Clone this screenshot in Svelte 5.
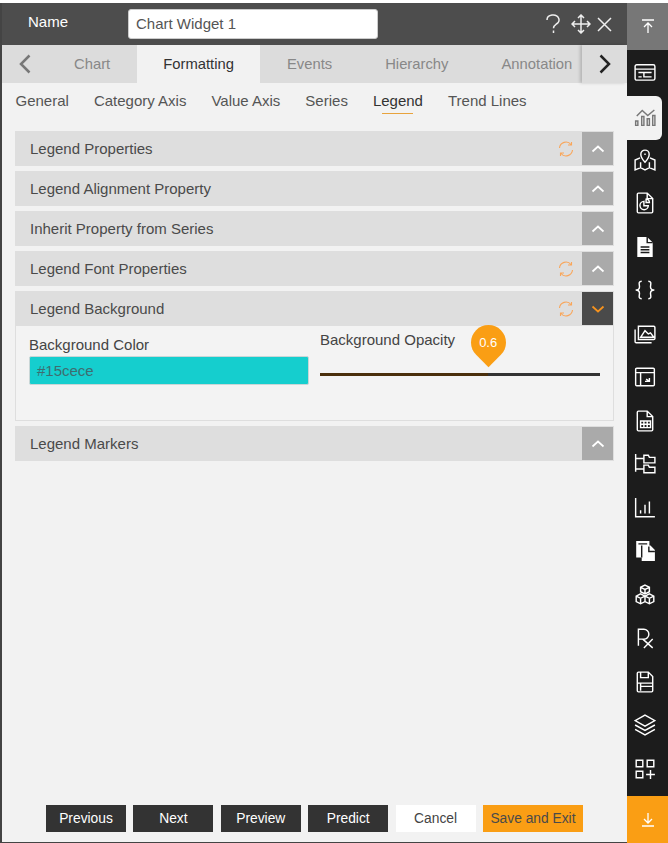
<script>
  const tabs = ["Chart", "Formatting", "Events", "Hierarchy", "Annotation"];
  const subTabs = ["General", "Category Axis", "Value Axis", "Series", "Legend", "Trend Lines"];
  const sections = [
    { title: "Legend Properties", reset: true },
    { title: "Legend Alignment Property" },
    { title: "Inherit Property from Series" },
    { title: "Legend Font Properties", reset: true },
    { title: "Legend Background", reset: true, open: true },
    { title: "Legend Markers" },
  ];
  const footer = ["Previous", "Next", "Preview", "Predict"];

  // one path per sidebar icon, all drawn on a 20x20 box
  const sideIcons = [
    "M2.500 2.500h15a1.500 1.500 0 0 1 1.500 1.500v11a1.500 1.500 0 0 1-1.500 1.500h-15a1.500 1.500 0 0 1-1.500-1.500V4a1.500 1.500 0 0 1 1.500-1.500zM1 6.500h18M4 9.500h12M9 9.500v4h7M4 13.500h3",
    "M1.500 18.500v-4h2v4zM7 18.500v-8h2v8zM12 18.500v-6h2v6zM17 18.500v-9h2v9zM2.500 10l5-5 5 4.500 6-5",
    "M5.500 8L1 10v9l5-2 4 2 4-2 5 2v-9l-4.500-2M6 17v-5M14 17v-5M10 1a3.800 3.800 0 0 1 3.800 3.800C13.800 8 10 12 10 12s-3.800-4-3.800-7.200A3.800 3.800 0 0 1 10 1zM10 4v1.500",
    "M4 1h8l5 5v12a1 1 0 0 1-1 1H4a1 1 0 0 1-1-1V2a1 1 0 0 1 1-1zM12 1v5h5M9 8.500a3.800 3.800 0 1 0 4 4H9zM11 6.500a3 3 0 0 1 3 3h-3z",
    "",
    "M7 2C3.500 2 5 5 5 7s-1 3-3.500 3C4 10 5 11 5 13s-1.500 5 2 5M13 2c3.500 0 2 3 2 5s1 3 3.500 3C16 10 15 11 15 13s1.500 5-2 5",
    "M4 3h14a1 1 0 0 1 1 1v10a1 1 0 0 1-1 1H4zM4 3v12M1 6v11a1 1 0 0 0 1 1h14M6 13l4-6 3 3 2-1 3 4z",
    "M2.500 2h15a1 1 0 0 1 1 1v14a1 1 0 0 1-1 1h-15a1 1 0 0 1-1-1V3a1 1 0 0 1 1-1zM1.500 6h17M6 6v12M10 14h4v-3M14 14l-3-2",
    "M4 1h8l5 5v12a1 1 0 0 1-1 1H4a1 1 0 0 1-1-1V2a1 1 0 0 1 1-1zM12 1v5h5M6 10h9v6H6zM6 13h9M9 10v6M12 10v6",
    "M1.500 1v16M1.500 5h7M1.500 14.500h7M9 2h4l1 2h5v5H9zM9 11h4l1 2h5v5H9z",
    "M1.500 1v17h17.500M6 15v-3M10 15V7M14 15V4",
    "",
    "M10 1l4 2v4l-4 2-4-2V3zM6 9l4 2v5l-4 2-4-2v-5zM14 9l4 2v5l-4 2-4-2v-5zM6 3l4 2 4-2M2 11l4 2 4-2 4 2 4-2M6 13v5M14 13v5M10 5v4",
    "M4 17V2h5a4.500 4.500 0 0 1 0 9H4M8 11l9 8M17 11l-8 8",
    "M4 1h9l4 4v13a1 1 0 0 1-1 1H4a1 1 0 0 1-1-1V2a1 1 0 0 1 1-1zM6 1v5h7V1M6 18v-7h8M3 11h14M6 14h11",
    "M10 1l9 5-9 5-9-5zM1 10l9 5 9-5M1 14l9 5 9-5",
    "M2 2h6v6H2zM12 2h6v6h-6zM2 12h6v6H2zM15 11v8M11 15h8",
  ];
</script>

<div class="page">
  <main class="panel">
    <header class="head">
      <span class="name">Name</span>
      <input class="name-input" value="Chart Widget 1" />
      <div class="head-icons">
        <svg class="help" width="17" height="20" viewBox="0 0 17 20"><path d="M2 6a6 5 0 1 1 9 4.300c-2 1.200-2.500 2-2.500 4" /><path d="M8.500 16.500v2.500" /></svg>
        <svg width="20" height="20" viewBox="0 0 20 20"><path d="M10 1v18M1 10h18M7 4l3-3 3 3M7 16l3 3 3-3M4 7l-3 3 3 3M16 7l3 3-3 3" /></svg>
        <svg width="15" height="15" viewBox="0 0 15 15"><path d="M1 1l13 13M14 1L1 14" /></svg>
      </div>
    </header>

    <nav class="tabs">
      <button class="arrow" aria-label="Back">
        <svg width="12" height="20" viewBox="0 0 12 20"><path d="M10.500 1.500L2 10l8.500 8.500" /></svg>
      </button>
      <div class="tab-strip">
        {#each tabs as tab}
          <span class="tab" class:active={tab === "Formatting"}>{tab}</span>
        {/each}
      </div>
      <button class="arrow next" aria-label="Forward">
        <svg width="12" height="20" viewBox="0 0 12 20"><path d="M1.500 1.500L10 10l-8.500 8.500" /></svg>
      </button>
    </nav>

    <div class="subtabs">
      {#each subTabs as sub}
        <span class="subtab" class:current={sub === "Legend"}>{sub}</span>
      {/each}
    </div>

    <div class="sections">
      {#each sections as section}
        <section class="section">
          <div class="bar">
            <span class="bar-title">{section.title}</span>
            {#if section.reset}
              <svg class="reset" width="16" height="16" viewBox="0 0 16 16">
                <path d="M1.500 7a6.500 6.500 0 0 1 11.500-3.500M14.500 9a6.500 6.500 0 0 1-11.500 3.500M13.500 1v3h-3.500M2.500 15v-3h3.500" />
              </svg>
            {/if}
            <span class="toggle" class:open={section.open}>
              <svg width="14" height="8" viewBox="0 0 14 8">
                <path d={section.open ? "M1.500 1.500L7 6.500l5.500-5" : "M1.500 6.500L7 1.500l5.500 5"} />
              </svg>
            </span>
          </div>
          {#if section.open}
            <div class="body">
              <div class="field">
                <span class="label">Background Color</span>
                <div class="swatch">#15cece</div>
              </div>
              <div class="field opacity">
                <span class="label">Background Opacity</span>
                <div class="slider">
                  <div class="fill" style="width: 60%"></div>
                  <div class="pin" style="left: 60%"><span>0.6</span></div>
                </div>
              </div>
            </div>
          {/if}
        </section>
      {/each}
    </div>

    <footer class="foot">
      {#each footer as label}
        <button class="btn">{label}</button>
      {/each}
      <button class="btn cancel">Cancel</button>
      <button class="btn save">Save and Exit</button>
    </footer>
  </main>

  <aside class="side">
    <div class="side-top">
      <svg width="14" height="15" viewBox="0 0 14 15"><path d="M1 1h12M7 14V4M3 8l4-4 4 4" /></svg>
    </div>
    <div class="side-list">
      {#each sideIcons as d, i}
        <div class="side-item" class:selected={i === 1}>
          {#if i === 4}
            <svg width="22" height="22" viewBox="0 0 20 20"><path class="solid" d="M3 1h9l5 5v13H3z" /><path class="cut" d="M12 1v5h5M6 10h8M6 12.500h8M6 15h8" /></svg>
          {:else if i === 11}
            <svg width="22" height="22" viewBox="0 0 20 20"><path class="solid" d="M2 1h12v4h1l4 4v10H7v-3H2z" /><path class="cut" d="M4 3.500h8M13.500 6v4.500H19M7 5v11" /></svg>
          {:else}
            <svg width="22" height="22" viewBox="0 0 20 20"><path {d} /></svg>
          {/if}
        </div>
      {/each}
    </div>
    <div class="side-bottom">
      <svg width="14" height="15" viewBox="0 0 14 15"><path d="M1 14h12M7 1v10M3 7l4 4 4-4" /></svg>
    </div>
  </aside>
</div>

<style>
  :global(body) {
    margin: 0;
    background: #fff;
  }

  .page {
    display: flex;
    width: 668px;
    height: 843px;
    padding-top: 3px;
    box-sizing: border-box;
    font-family: "Liberation Sans", Arial, sans-serif;
    color: #444;
    overflow: hidden;
  }

  svg {
    fill: none;
    stroke: currentColor;
    display: block;
  }

  .panel {
    flex: 1;
    min-width: 0;
    display: flex;
    flex-direction: column;
    background: #f2f2f2;
    border-left: 2px solid #444;
    border-bottom: 1px solid #444;
  }

  .head {
    height: 42px;
    flex: none;
    display: flex;
    align-items: center;
    background: #4d4d4d;
    color: #fff;
  }

  .name {
    width: 126px;
    padding-left: 26px;
    box-sizing: border-box;
    font-size: 15px;
    margin-top: -6px;
  }

  .name-input {
    width: 250px;
    height: 30px;
    box-sizing: border-box;
    border: 1px solid #ccc;
    border-radius: 3px;
    padding: 0 7px 2px;
    font: 15px "Liberation Sans", Arial, sans-serif;
    color: #555;
    background: #fff;
  }

  .head-icons {
    margin-left: auto;
    margin-right: 15px;
    display: flex;
    align-items: center;
    gap: 6.500px;
    color: #eee;
    stroke-width: 1.500;
  }

  .help {
    margin-right: 2px;
  }

  .tabs {
    height: 38px;
    flex: none;
    display: flex;
    background: #dcdcdc;
  }

  .arrow {
    width: 45.500px;
    flex: none;
    border: 0;
    padding: 0 0 0 17px;
    background: #dcdcdc;
    color: #777;
    stroke-width: 2.500;
  }

  .arrow.next {
    width: 45px;
    padding-left: 17px;
    color: #222;
    box-shadow: -2px 0 3px rgba(0, 0, 0, 0.18);
    position: relative;
  }

  .tab-strip {
    flex: 1;
    min-width: 0;
    display: flex;
    overflow: hidden;
  }

  .tab {
    flex: none;
    padding: 0 26.500px;
    line-height: 38px;
    font-size: 14.800px;
    color: #888;
  }

  .tab.active {
    background: #f2f2f2;
    color: #333;
  }

  .subtabs {
    display: flex;
    gap: 25px;
    padding: 8px 13.500px 0;
    height: 39px;
    box-sizing: border-box;
    flex: none;
  }

  .subtab {
    position: relative;
    font-size: 15px;
    line-height: 19px;
    color: #555;
    height: 19px;
  }

  .subtab.current {
    color: #333;
  }

  .subtab.current::after {
    content: "";
    position: absolute;
    left: 9px;
    right: 10px;
    bottom: -4px;
    height: 1px;
    background: #e8a33d;
  }

  .sections {
    display: flex;
    flex-direction: column;
    gap: 5px;
    padding: 9px 13px 0;
  }

  .bar {
    height: 35px;
    display: flex;
    align-items: center;
    background: #dedede;
    padding: 0 1px 0 15px;
  }

  .bar-title {
    flex: 1;
    font-size: 15px;
    color: #4a4a4a;
  }

  .reset {
    color: #f9a65a;
    stroke-width: 1.100;
    margin-right: 8px;
  }

  .toggle {
    width: 31px;
    height: 33px;
    display: flex;
    align-items: center;
    justify-content: center;
    background: #aaa;
    color: #fff;
    stroke-width: 1.700;
  }

  .toggle.open {
    background: #4a4a4a;
    color: #f7931e;
  }

  .body {
    display: flex;
    height: 95px;
    box-sizing: border-box;
    background: #f3f3f3;
    border: 1px solid #dedede;
    border-top: 0;
  }

  .field {
    display: flex;
    flex-direction: column;
    box-sizing: border-box;
    width: 291px;
    padding: 9px 0 0 13px;
  }

  .opacity {
    padding: 4px 0 0 13px;
    width: 294px;
  }

  .label {
    font-size: 15px;
    line-height: 19px;
    color: #444;
  }

  .swatch {
    margin-top: 2px;
    height: 29px;
    line-height: 27px;
    padding-left: 7px;
    width: 280px;
    box-sizing: border-box;
    background: #15cece;
    border: 1px solid #c9d6d6;
    border-radius: 2px;
    font-size: 15px;
    color: #3e6d70;
  }

  .slider {
    position: relative;
    margin-top: 24px;
    width: 280px;
    height: 3px;
    background: #333;
  }

  .fill {
    height: 100%;
    background: #4a2f0c;
  }

  .pin {
    position: absolute;
    bottom: 16px;
    width: 35px;
    height: 35px;
    margin-left: -17px;
    background: #fa9e14;
    border-radius: 50% 50% 0 50%;
    transform: rotate(45deg);
    display: flex;
    align-items: center;
    justify-content: center;
    color: #fff;
    font-size: 13px;
  }

  .pin span {
    transform: rotate(-45deg);
  }

  .foot {
    margin-top: auto;
    display: flex;
    padding: 0 0 10px 44px;
  }

  .btn {
    width: 80px;
    height: 27px;
    margin-right: 7.400px;
    padding: 0;
    border: 0;
    background: #333;
    color: #fff;
    font: 13.800px "Liberation Sans", Arial, sans-serif;
  }

  .btn.cancel {
    background: #fff;
    color: #444;
  }

  .btn.save {
    width: 100px;
    background: #fa9e14;
    color: #4a4a4a;
    margin-right: 0;
  }

  .side {
    width: 41px;
    flex: none;
    display: flex;
    flex-direction: column;
    background: #1c1c1c;
    color: #fff;
    stroke-width: 1.300;
  }

  .side-top {
    height: 47px;
    flex: none;
    display: flex;
    align-items: center;
    justify-content: center;
    background: #777;
  }

  .side-list {
    flex: 1;
    padding-top: 1px;
  }

  .side-item {
    height: 43.500px;
    display: flex;
    align-items: center;
    justify-content: center;
    padding-right: 5px;
    box-sizing: border-box;
    position: relative;
    isolation: isolate;
  }

  /* the highlight sits a bit lower than the icon row */
  .side-item.selected {
    color: #777;
  }

  .side-item.selected::before {
    content: "";
    position: absolute;
    z-index: -1;
    left: 0;
    width: 35px;
    top: 1.500px;
    bottom: -2px;
    background: #f2f2f2;
    border-radius: 0 6px 6px 0;
  }

  .solid {
    fill: #fff;
    stroke: none;
  }

  .cut {
    stroke: #1c1c1c;
  }

  .side-bottom {
    height: 47px;
    flex: none;
    display: flex;
    align-items: center;
    justify-content: center;
    background: #fa9e14;
  }
</style>
